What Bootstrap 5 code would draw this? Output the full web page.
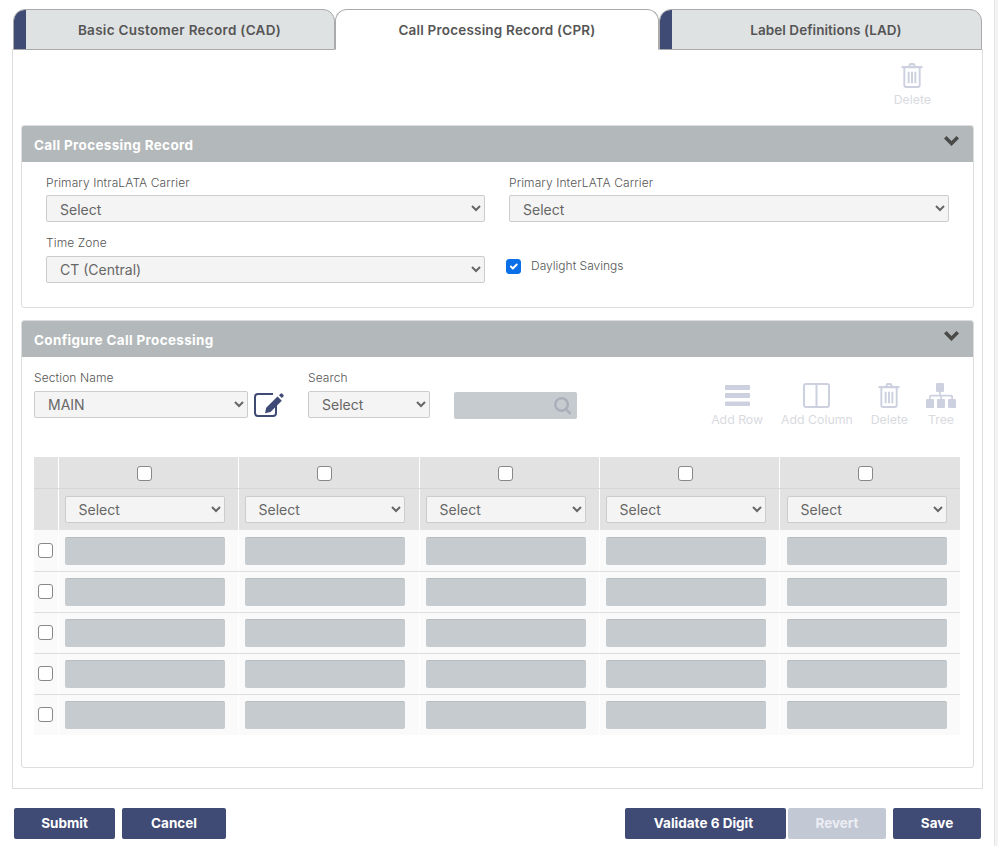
<!DOCTYPE html>
<html lang="en">
<head>
<meta charset="utf-8">
<title>Call Processing Record</title>
<link href="https://cdn.jsdelivr.net/npm/bootstrap@5.3.0/dist/css/bootstrap.min.css" rel="stylesheet">
<style>
html,body{height:846px;overflow:hidden}
body{font-family:"Inter","Noto Sans",sans-serif;color:#555;background:#fff;font-size:14px;position:relative}
.edge-bar{position:absolute;top:0;bottom:0;right:0;width:4px;background:#f3f3f3;border-left:1px solid #e4e4e4}
.page-wrap{padding:9px 15px 0 12px;width:998px}
.tab-strip{display:flex;height:41px;padding-left:1px;border:0;flex-wrap:nowrap;position:relative;z-index:1}
.tab-strip .nav-item{margin:0}
.tab-strip .nav-link{height:41px;width:100%;display:flex;align-items:center;justify-content:center;padding:2px 0 0 11px;color:#555;font-weight:600;font-size:13.5px;background:#dfe2e3;border:1px solid #aaa;border-radius:12px 12px 0 0;position:relative;overflow:hidden;letter-spacing:.3px}
.tab-strip .nav-link.inactive-mark::before{content:"";position:absolute;left:0;top:0;bottom:0;width:12px;background:#3f4a75;border-radius:10px 0 0 0}
.tab-strip .nav-link.active{background:#fff;border-color:#aaa;border-bottom-color:#fff;color:#555;padding-left:0;letter-spacing:.2px}
.tab-one{width:322px}
.tab-two{width:324px}
.tab-three{width:323px}
.tab-three .nav-link{letter-spacing:.05px}
.tab-body{border:1px solid #ddd;border-top:0;height:740px;margin-top:-1px;padding:0 8px}
.top-actions{height:76px;display:flex;justify-content:flex-end;padding-top:14px;padding-right:43px}
.tool-btn{display:flex;flex-direction:column;align-items:center;color:#d9dae0;font-size:12.3px;font-weight:400;line-height:14px;background:none;border:0;padding:0}
.tool-btn svg{display:block;height:25px;margin-bottom:5px;fill:#cdd1df}
.sec-card{border:1px solid #ddd;border-radius:3px;background:#fff}
.sec-card>.card-header{background:#b3b8ba;border:0;border-radius:2px 2px 0 0;height:36px;padding:2px 14px 0 12px;display:flex;align-items:center;justify-content:space-between;color:#fff;font-weight:700;font-size:13.5px;letter-spacing:.33px}
.sec-card>.card-header svg{fill:#4a4a48;margin-top:-8px}
.first-card{height:183px;padding-bottom:0}
.second-card{height:448px;margin-top:12px}
.field-label{font-size:12px;line-height:15px;margin:0 0 6px;color:#555;display:block;font-weight:300;letter-spacing:.1px}
.plain-select{appearance:auto;-webkit-appearance:auto;background-image:none;height:27px;padding:0 0 0 9px;font-size:14px;color:#666;background-color:#f4f4f4;border:1px solid #ccc;border-radius:2px}
.first-body{padding:13px 25px 0 24px;display:grid;grid-template-columns:439px 440px;column-gap:24px;row-gap:13px}
.first-body>div:nth-child(-n+2) .field-label{margin-bottom:5px}
.first-body>div:nth-child(-n+2) .plain-select{padding-top:2px}
.check-line{display:flex;align-items:center;gap:10px;height:27px;margin-top:18px;padding:0;margin-left:-3px}
.check-line .form-check-input{width:15px;height:15px;margin:0;border-radius:3px;float:none;background-color:#0b6fe8;border-color:#0b6fe8}
.check-line .form-check-label{font-size:12px;color:#555;font-weight:300;margin-top:-2px}
.config-tools{display:flex;padding:13px 12px 0;height:100px;position:relative}
.name-col{width:214px}
.edit-link{width:60px;padding:23px 0 0 6px}
.search-col{width:122px;margin-left:0}
.search-box{width:123px;height:27px;background:#c5cbce;border-radius:2px;margin:22px 0 0 24px;display:flex;align-items:center;justify-content:flex-end;padding-right:5px}
.search-box svg{fill:#a9b0ba}
.tool-group{margin-left:auto;display:flex;padding-top:13px;gap:18px;margin-right:5px}
.grid-table{table-layout:fixed;width:926px;margin:0 0 0 12px;border-collapse:collapse;--bs-table-bg:transparent}
.grid-table td{padding:0;border:0;border-left:1px solid #fff;vertical-align:middle;background:#fafafa;border-bottom:1px solid #ddd}
.grid-table tr:last-child td{border-bottom:0}
.grid-table td:first-child{border-left:0;text-align:center;padding-right:1px}
.grid-table thead td{background:#e2e2e2;border-bottom-color:#d6d6d6}
.grid-table .head-check{height:31px;text-align:center;padding-right:8px}
.grid-table .head-pick{height:42px;padding:0 13px 0 6px}
.grid-table .body-cell{height:41px;padding:0 13px 0 6px}
.grid-table tbody tr:first-child .body-cell{padding-top:2px}
.grid-table .head-pick:nth-child(3),.grid-table .body-cell:nth-child(3){padding-right:14px}
.grid-table .head-pick:nth-child(6),.grid-table .body-cell:nth-child(6){padding-left:7px;padding-right:13px}
.grid-table .form-check-input{width:15px;height:15px;margin:0;border:1px solid #888;border-radius:3px;vertical-align:middle;background-color:#fff}
.grid-table tbody .form-check-input{margin-top:-4px}
.grid-table tbody tr:first-child .form-check-input{margin-top:-2px}
.blank-input{height:28px;width:100%;background:#c5cbce;border:0;border-top:1px solid #b8bdbf;border-radius:2px;display:block}
.foot-bar{display:flex;margin-top:19px;padding:0 2px;gap:7px}
.foot-btn{height:31px;padding:0;border:0;border-radius:2px;background:#3f4a75;color:#fff;font-weight:700;font-size:13.5px}
.foot-btn:disabled{background:#c3c8d5;color:#eceef3;opacity:1}
.w-submit{width:101px}.w-cancel{width:104px}.w-validate{width:161px;margin-left:auto;padding-right:4px}.w-revert{width:98px;margin-left:-5px}.w-save{width:88px}
.col-a{width:24px}.col-b{width:180px}.col-c{width:181px}
</style>
</head>
<body>
<div class="edge-bar"></div>
<div class="page-wrap">
  <ul class="nav tab-strip">
    <li class="nav-item tab-one"><a class="nav-link inactive-mark" href="#">Basic Customer Record (CAD)</a></li>
    <li class="nav-item tab-two"><a class="nav-link active" href="#">Call Processing Record (CPR)</a></li>
    <li class="nav-item tab-three"><a class="nav-link inactive-mark" href="#">Label Definitions (LAD)</a></li>
  </ul>
  <div class="tab-body">
    <div class="top-actions">
      <button class="tool-btn" type="button">
        <svg width="22" height="25" viewBox="0 0 22 26"><path fill-rule="evenodd" d="M7 3l1.200-2.200C8.500.3 9 0 9.600 0h2.800c.6 0 1.100.3 1.400.8L15 3h6a1 1 0 0 1 1 1v.8a.7.7 0 0 1-.7.7H20V23a3 3 0 0 1-3 3H5a3 3 0 0 1-3-3V5.500H.7A.7.7 0 0 1 0 4.800V4a1 1 0 0 1 1-1zM9.300 3h3.400l-.6-1H9.900zM4 5.500V23a1 1 0 0 0 1 1h12a1 1 0 0 0 1-1V5.500zM6.500 9h2v12h-2zM10 9h2v12h-2zM13.500 9h2v12h-2z"/></svg>
        Delete
      </button>
    </div>
    <div class="card sec-card first-card">
      <div class="card-header">Call Processing Record
        <svg width="15" height="10" viewBox="0 0 15 10"><path d="M2.500 0 7.500 5 12.500 0 15 2.500 7.500 10 0 2.500z"/></svg>
      </div>
      <div class="first-body">
        <div>
          <label class="field-label">Primary IntraLATA Carrier</label>
          <select class="form-select plain-select"><option>Select</option></select>
        </div>
        <div>
          <label class="field-label">Primary InterLATA Carrier</label>
          <select class="form-select plain-select"><option>Select</option></select>
        </div>
        <div>
          <label class="field-label">Time Zone</label>
          <select class="form-select plain-select"><option>CT (Central)</option></select>
        </div>
        <div class="form-check check-line">
          <input class="form-check-input" type="checkbox" checked id="dst">
          <label class="form-check-label" for="dst">Daylight Savings</label>
        </div>
      </div>
    </div>
    <div class="card sec-card second-card">
      <div class="card-header">Configure Call Processing
        <svg width="15" height="10" viewBox="0 0 15 10"><path d="M2.500 0 7.500 5 12.500 0 15 2.500 7.500 10 0 2.500z"/></svg>
      </div>
      <div class="config-tools">
        <div class="name-col">
          <label class="field-label">Section Name</label>
          <select class="form-select plain-select"><option>MAIN</option></select>
        </div>
        <div class="edit-link">
          <svg width="30" height="24" viewBox="0 0 30 24"><path fill="#3f4a75" fill-rule="evenodd" d="M4 0h15v2H4a2 2 0 0 0-2 2v16a2 2 0 0 0 2 2h15a2 2 0 0 0 2-2v-7l2-2v9a4 4 0 0 1-4 4H4a4 4 0 0 1-4-4V4a4 4 0 0 1 4-4z"/><path fill="#3f4a75" d="M23.500 3.500 27.800 7.800 16.500 19l-5.500 1.200 1.200-5.500zM25 2.200l1.500-1.500a1.200 1.200 0 0 1 1.700 0l1.100 1.100a1.200 1.200 0 0 1 0 1.700L27.800 5z"/></svg>
        </div>
        <div class="search-col">
          <label class="field-label">Search</label>
          <select class="form-select plain-select"><option>Select</option></select>
        </div>
        <div class="search-box">
          <svg width="18" height="18" viewBox="0 0 18 18"><path fill-rule="evenodd" d="M7.500 0a7.500 7.500 0 0 1 6 12l4 4-1.800 1.800-4-4A7.500 7.500 0 1 1 7.500 0zm0 2.500a5 5 0 1 0 0 10 5 5 0 0 0 0-10z"/></svg>
        </div>
        <div class="tool-group">
          <button class="tool-btn" type="button"><svg width="25" height="25" viewBox="0 0 25 25"><path d="M1 2h23a1 1 0 0 1 1 1v3a1 1 0 0 1-1 1H1a1 1 0 0 1-1-1V3a1 1 0 0 1 1-1zM1 10h23a1 1 0 0 1 1 1v3a1 1 0 0 1-1 1H1a1 1 0 0 1-1-1v-3a1 1 0 0 1 1-1zM1 18.500h23a1 1 0 0 1 1 1V22a1 1 0 0 1-1 1H1a1 1 0 0 1-1-1v-2.500a1 1 0 0 1 1-1z"/></svg>Add Row</button>
          <button class="tool-btn" type="button"><svg width="27" height="25" viewBox="0 0 27 25"><path fill-rule="evenodd" d="M3 0h21a3 3 0 0 1 3 3v19a3 3 0 0 1-3 3H3a3 3 0 0 1-3-3V3a3 3 0 0 1 3-3zM2 3v19a1 1 0 0 0 1 1h9.500V2H3a1 1 0 0 0-1 1zm12.500-1v21H24a1 1 0 0 0 1-1V3a1 1 0 0 0-1-1z"/></svg>Add Column</button>
          <button class="tool-btn" type="button"><svg width="22" height="25" viewBox="0 0 22 26"><path fill-rule="evenodd" d="M7 3l1.200-2.200C8.500.3 9 0 9.600 0h2.800c.6 0 1.100.3 1.400.8L15 3h6a1 1 0 0 1 1 1v.8a.7.7 0 0 1-.7.7H20V23a3 3 0 0 1-3 3H5a3 3 0 0 1-3-3V5.500H.7A.7.7 0 0 1 0 4.800V4a1 1 0 0 1 1-1zM9.300 3h3.400l-.6-1H9.900zM4 5.500V23a1 1 0 0 0 1 1h12a1 1 0 0 0 1-1V5.500zM6.500 9h2v12h-2zM10 9h2v12h-2zM13.500 9h2v12h-2z"/></svg>Delete</button>
          <button class="tool-btn" type="button"><svg width="30" height="25" viewBox="0 0 30 25"><path d="M11 0h6a1 1 0 0 1 1 1v7a1 1 0 0 1-1 1h-2.200v2.800h10.700a1.500 1.500 0 0 1 1.500 1.500V16H29a1 1 0 0 1 1 1v7a1 1 0 0 1-1 1h-6a1 1 0 0 1-1-1v-7a1 1 0 0 1 1-1h2.200v-2.600H15.800V16H18a1 1 0 0 1 1 1v7a1 1 0 0 1-1 1h-6a1 1 0 0 1-1-1v-7a1 1 0 0 1 1-1h2.200v-2.600H4.800V16H7a1 1 0 0 1 1 1v7a1 1 0 0 1-1 1H1a1 1 0 0 1-1-1v-7a1 1 0 0 1 1-1h2.200v-2.700a1.500 1.500 0 0 1 1.500-1.500h8.500V9H11a1 1 0 0 1-1-1V1a1 1 0 0 1 1-1z"/></svg>Tree</button>
        </div>
      </div>
      <table class="table grid-table" id="grid">
        <colgroup><col class="col-a"><col class="col-b"><col class="col-c"><col class="col-b"><col class="col-b"><col class="col-c"></colgroup>
        <thead></thead><tbody></tbody>
      </table>
    </div>
  </div>
  <div class="foot-bar">
    <button class="btn foot-btn w-submit" type="button">Submit</button>
    <button class="btn foot-btn w-cancel" type="button">Cancel</button>
    <button class="btn foot-btn w-validate" type="button">Validate 6 Digit</button>
    <button class="btn foot-btn w-revert" type="button" disabled>Revert</button>
    <button class="btn foot-btn w-save" type="button">Save</button>
  </div>
</div>
<script>
const t=document.getElementById('grid');
const five=s=>Array(5).fill(s).join('');
t.tHead.innerHTML='<tr><td></td>'+five('<td class="head-check"><input class="form-check-input" type="checkbox"></td>')+'</tr>'+
 '<tr><td></td>'+five('<td class="head-pick"><select class="form-select plain-select"><option>Select</option></select></td>')+'</tr>';
t.tBodies[0].innerHTML=Array(5).fill('<tr><td><input class="form-check-input" type="checkbox"></td>'+five('<td class="body-cell"><div class="blank-input"></div></td>')+'</tr>').join('');
</script>
<script src="https://cdn.jsdelivr.net/npm/bootstrap@5.3.0/dist/js/bootstrap.bundle.min.js"></script>
</body>
</html>
